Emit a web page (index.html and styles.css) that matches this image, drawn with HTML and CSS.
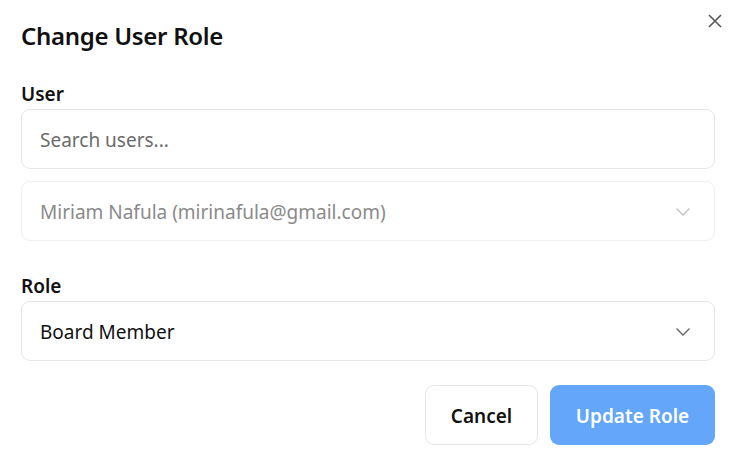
FILE: index.html
```html
<!DOCTYPE html>
<html>
<head>
<meta charset="utf-8">
<link rel="stylesheet" href="styles.css">
</head>
<body>
<div class="dialog">
  <button class="close" aria-label="Close">
    <svg width="16" height="16" viewBox="0 0 16 16"><path d="M2 2L14 14M14 2L2 14" stroke="#555" stroke-width="1.6" fill="none"/></svg>
  </button>
  <h2 class="title">Change User Role</h2>
  <div class="field user-field">
    <label class="label">User</label>
    <div class="input">Search users...</div>
    <div class="select disabled">
      <span>Miriam Nafula (mirinafula@gmail.com)</span>
      <svg class="chev" width="16" height="10" viewBox="0 0 16 10"><path d="M1.5 1.5L8 8L14.5 1.5" stroke="currentColor" stroke-width="1.4" fill="none"/></svg>
    </div>
  </div>
  <div class="field role-field">
    <label class="label">Role</label>
    <div class="select">
      <span>Board Member</span>
      <svg class="chev" width="16" height="10" viewBox="0 0 16 10"><path d="M1.5 1.5L8 8L14.5 1.5" stroke="currentColor" stroke-width="1.4" fill="none"/></svg>
    </div>
  </div>
  <div class="actions">
    <button class="btn cancel">Cancel</button>
    <button class="btn primary">Update Role</button>
  </div>
</div>
</body>
</html>
```
FILE: styles.css
```css
* { box-sizing: border-box; }
html, body { margin: 0; padding: 0; background: #fff; }
body { font-family: "Noto Sans", "Open Sans", sans-serif; color: #111; }
.dialog { position: relative; padding: 19px 21px 0 21px; }
.close { position: absolute; top: 13px; right: 13px; border: 0; background: none; padding: 0; width: 16px; height: 16px; }
.close svg { display: block; }
.title { margin: 0; font-size: 24px; font-weight: 600; line-height: 34px; letter-spacing: -0.3px; }
.field { display: flex; flex-direction: column; }
.user-field { margin-top: 27px; }
.role-field { margin-top: 31px; }
.label { font-size: 19px; font-weight: 600; line-height: 28px; margin-bottom: 1px; }
.input, .select { height: 60px; border: 1px solid #e6e6e6; border-radius: 9px; padding: 0 18px; display: flex; align-items: center; font-size: 19px; padding-top: 2px; }
.input { color: #6b6b6b; }
.select { justify-content: space-between; color: #111; }
.select.disabled { margin-top: 12px; color: #8a8a8a; border-color: #efefef; }
.select.disabled .chev { color: #c4c4c4; }
.chev { color: #666; margin-right: 5px; }
.actions { display: flex; justify-content: flex-end; gap: 12px; margin-top: 24px; }
.btn { height: 60px; border-radius: 9px; font-family: inherit; font-size: 19px; font-weight: 600; padding: 2px 0 0; }
.cancel { width: 113px; background: #fff; border: 1px solid #e6e6e6; color: #111; }
.primary { width: 165px; background: #63a6fa; border: 0; color: #fff; }
```
